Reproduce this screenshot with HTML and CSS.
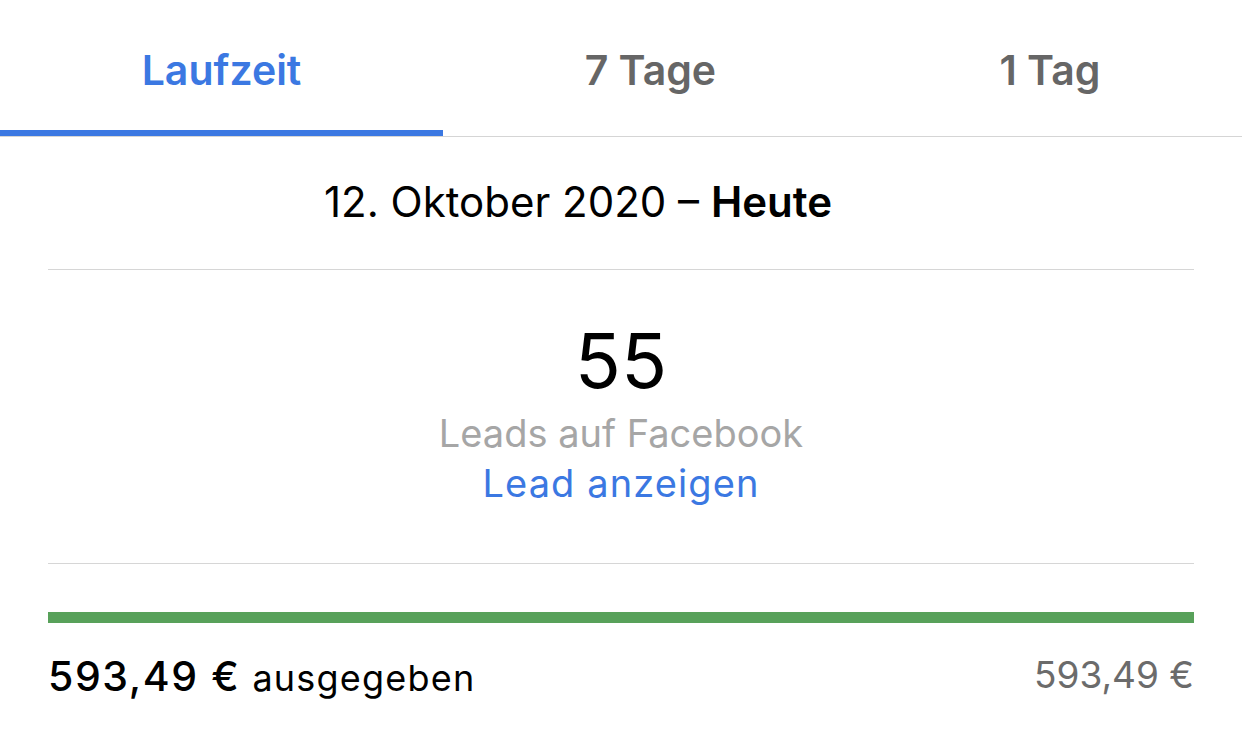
FILE: index.html
```html
<!DOCTYPE html>
<html lang="de">
<head>
<meta charset="utf-8">
<title>Ergebnisse</title>
<link rel="stylesheet" href="styles.css">
</head>
<body>
<div class="tabs">
  <div class="tab active">Laufzeit</div>
  <div class="tab">7 Tage</div>
  <div class="tab">1 Tag</div>
</div>
<div class="content">
  <div class="date">12. Oktober 2020 – <b>Heute</b></div>
  <div class="leads">
    <div class="count">55</div>
    <div class="label">Leads auf Facebook</div>
    <div class="link">Lead anzeigen</div>
  </div>
  <div class="bar"></div>
  <div class="spend">
    <div class="spent"><span class="amount">593,49 €</span> <span class="word">ausgegeben</span></div>
    <div class="budget">593,49 €</div>
  </div>
</div>
</body>
</html>
```
FILE: styles.css
```css
html, body {
  margin: 0;
  padding: 0;
  background: #ffffff;
}
body {
  font-family: Inter, "Liberation Sans", sans-serif;
  color: #000000;
  width: 1242px;
  height: 734px;
  overflow: hidden;
}
.tabs {
  display: flex;
  border-bottom: 1px solid #d5d5d5;
}
.tab {
  flex: 1 1 auto;
  text-align: center;
  font-size: 41px;
  font-weight: 600;
  line-height: 50px;
  color: #666666;
  padding: 45px 0 41px;
}
.tab.active {
  color: #3b78e2;
  padding-bottom: 35px;
  border-bottom: 6px solid #3b78e2;
}
.content {
  padding: 0 48px;
}
.date {
  font-size: 42px;
  line-height: 50px;
  padding: 40px 86px 42px 0;
  text-align: center;
  border-bottom: 1px solid #d6d6d6;
}
.date b {
  font-weight: 600;
}
.leads {
  text-align: center;
  padding: 50px 0 55px;
  border-bottom: 1px solid #d6d6d6;
}
.count {
  font-size: 76px;
  line-height: 80px;
}
.label {
  font-size: 38px;
  line-height: 50px;
  color: #a6a6a6;
  margin-top: 8px;
}
.link {
  font-size: 38px;
  line-height: 50px;
  color: #3b78e2;
  letter-spacing: 1.1px;
}
.bar {
  height: 11px;
  background: #58a15a;
  margin-top: 48px;
}
.spend {
  display: flex;
  justify-content: space-between;
  align-items: baseline;
  padding-top: 28px;
}
.spent {
  display: flex;
  align-items: baseline;
  gap: 12px;
}
.amount {
  font-size: 41px;
  font-weight: 500;
  line-height: 50px;
  letter-spacing: 1.6px;
}
.word {
  font-size: 36px;
  line-height: 50px;
  letter-spacing: 1.2px;
}
.budget {
  font-size: 37px;
  line-height: 50px;
  color: #6b6b6b;
  position: relative;
  top: -3px;
}
```
